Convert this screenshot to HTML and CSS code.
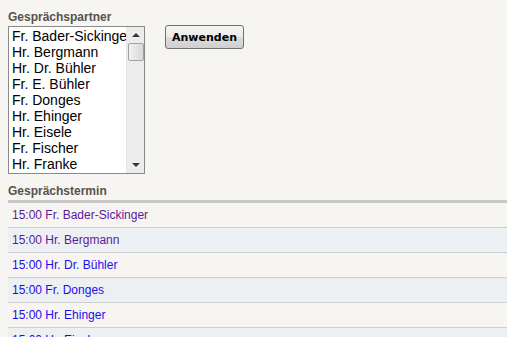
FILE: index.html
```html
<!DOCTYPE html>
<html lang="de">
<head>
    <meta charset="UTF-8">
    <meta name="viewport" content="width=device-width, initial-scale=1.0">
    <title>Gesprächstermine</title>
    <link rel="stylesheet" href="styles.css">
</head>
<body>
    <div class="page">
        <h3 class="section-title">Gesprächspartner</h3>
        <div class="filter">
            <div class="listbox">
                <ul class="options">
                    <li>Fr. Bader-Sickinger</li>
                    <li>Hr. Bergmann</li>
                    <li>Hr. Dr. Bühler</li>
                    <li>Fr. E. Bühler</li>
                    <li>Fr. Donges</li>
                    <li>Hr. Ehinger</li>
                    <li>Hr. Eisele</li>
                    <li>Fr. Fischer</li>
                    <li>Hr. Franke</li>
                </ul>
                <div class="scrollbar">
                    <span class="arrow up"></span>
                    <span class="thumb"></span>
                    <span class="track"></span>
                    <span class="arrow down"></span>
                </div>
            </div>
            <button class="apply">Anwenden</button>
        </div>

        <h3 class="section-title dates-title">Gesprächstermin</h3>
        <ul class="dates">
            <li><a class="visited" href="#">15:00 Fr. Bader-Sickinger</a></li>
            <li><a class="visited" href="#">15:00 Hr. Bergmann</a></li>
            <li><a href="#">15:00 Hr. Dr. Bühler</a></li>
            <li><a href="#">15:00 Fr. Donges</a></li>
            <li><a href="#">15:00 Hr. Ehinger</a></li>
            <li><a href="#">15:00 Hr. Eisele</a></li>
        </ul>
    </div>
</body>
</html>
```

FILE: styles.css
```css
body {
    margin: 0;
    font-family: "Liberation Sans", Arial, sans-serif;
    background-color: #f7f5f1; /* helles Papier */
    overflow: hidden;
}
.page {
    padding: 9px 0 0 8px;
}
.section-title {
    margin: 0;
    font-size: 12px;
    font-weight: bold;
    color: #57524c;
    line-height: 16px;
}
.filter {
    display: flex;
    align-items: flex-start;
    gap: 20px;
    margin-top: 1px;
}
.listbox {
    display: flex;
    width: 135px;
    height: 146px;
    border: 1px solid #8a8a8a;
    background-color: #fff;
}
.options {
    flex: 1;
    list-style: none;
    margin: 0;
    padding: 1px 0 0 3px;
    overflow: hidden;
    font-size: 14px;
    line-height: 16px;
    color: #000;
}
.options li {
    white-space: nowrap;
}
.scrollbar {
    width: 17px;
    display: flex;
    flex-direction: column;
    align-items: center;
    background-color: #ececec;
    border-left: 1px solid #e4e4e4;
}
.arrow {
    width: 0;
    height: 0;
    border-left: 4px solid transparent;
    border-right: 4px solid transparent;
}
.arrow.up {
    margin: 6px 0 6px;
    border-bottom: 4px solid #333;
}
.arrow.down {
    margin: 6px 0 6px;
    border-top: 4px solid #333;
}
.thumb {
    width: 14px;
    height: 16px;
    border: 1px solid #a0a0a0;
    border-radius: 2px;
    background: linear-gradient(to right, #f2f2f2, #d6d6d6);
}
.track {
    flex: 1;
}
.apply {
    margin-top: -1px;
    width: 79px;
    height: 24px;
    padding: 0;
    font-family: Tahoma, "DejaVu Sans", sans-serif;
    font-size: 11px;
    font-weight: bold;
    color: #000;
    border: 1px solid #707070;
    border-radius: 3px;
    background: linear-gradient(#f4f4f4 0%, #ebebeb 50%, #dddddd 51%, #cfcfcf 100%);
}
.dates-title {
    margin-top: 9px;
    padding-bottom: 1px;
    border-bottom: 3px solid #c8c8c8;
}
.dates {
    list-style: none;
    margin: 0;
    padding: 0;
}
.dates li {
    height: 24px;
    line-height: 24px;
    padding-left: 4px;
    border-bottom: 1px solid #cfcfcf;
    font-size: 12px;
}
.dates li:nth-child(even) {
    background-color: #edf0f3;
}
.dates a {
    color: #1a0dee;
    text-decoration: none;
}
.dates a.visited {
    color: #5a1a9a;
}
```
